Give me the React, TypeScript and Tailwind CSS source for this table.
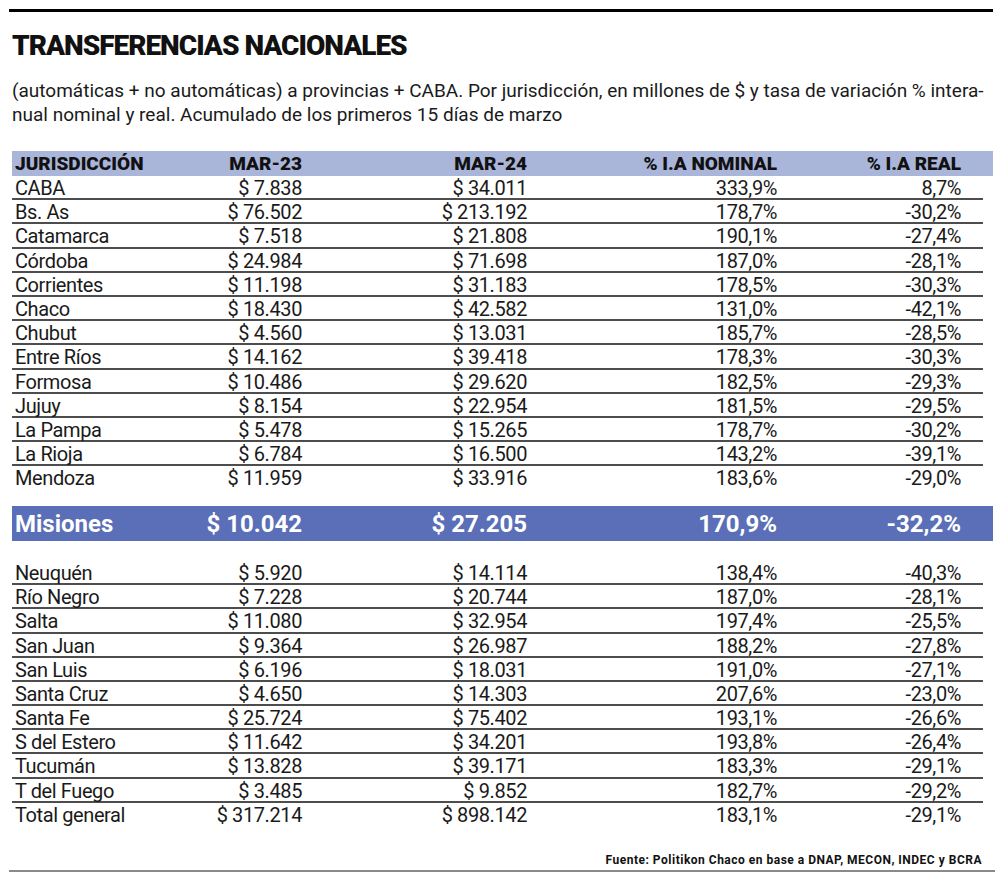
import React from "react";

type Row = [string, string, string, string, string];

const topRows: Row[] = [
  ["CABA", "$ 7.838", "$ 34.011", "333,9%", "8,7%"],
  ["Bs. As", "$ 76.502", "$ 213.192", "178,7%", "-30,2%"],
  ["Catamarca", "$ 7.518", "$ 21.808", "190,1%", "-27,4%"],
  ["Córdoba", "$ 24.984", "$ 71.698", "187,0%", "-28,1%"],
  ["Corrientes", "$ 11.198", "$ 31.183", "178,5%", "-30,3%"],
  ["Chaco", "$ 18.430", "$ 42.582", "131,0%", "-42,1%"],
  ["Chubut", "$ 4.560", "$ 13.031", "185,7%", "-28,5%"],
  ["Entre Ríos", "$ 14.162", "$ 39.418", "178,3%", "-30,3%"],
  ["Formosa", "$ 10.486", "$ 29.620", "182,5%", "-29,3%"],
  ["Jujuy", "$ 8.154", "$ 22.954", "181,5%", "-29,5%"],
  ["La Pampa", "$ 5.478", "$ 15.265", "178,7%", "-30,2%"],
  ["La Rioja", "$ 6.784", "$ 16.500", "143,2%", "-39,1%"],
  ["Mendoza", "$ 11.959", "$ 33.916", "183,6%", "-29,0%"],
];

const bottomRows: Row[] = [
  ["Neuquén", "$ 5.920", "$ 14.114", "138,4%", "-40,3%"],
  ["Río Negro", "$ 7.228", "$ 20.744", "187,0%", "-28,1%"],
  ["Salta", "$ 11.080", "$ 32.954", "197,4%", "-25,5%"],
  ["San Juan", "$ 9.364", "$ 26.987", "188,2%", "-27,8%"],
  ["San Luis", "$ 6.196", "$ 18.031", "191,0%", "-27,1%"],
  ["Santa Cruz", "$ 4.650", "$ 14.303", "207,6%", "-23,0%"],
  ["Santa Fe", "$ 25.724", "$ 75.402", "193,1%", "-26,6%"],
  ["S del Estero", "$ 11.642", "$ 34.201", "193,8%", "-26,4%"],
  ["Tucumán", "$ 13.828", "$ 39.171", "183,3%", "-29,1%"],
  ["T del Fuego", "$ 3.485", "$ 9.852", "182,7%", "-29,2%"],
  ["Total general", "$ 317.214", "$ 898.142", "183,1%", "-29,1%"],
];

const cols = "grid grid-cols-[160px_130px_225px_250px_184px_1fr]";

const DataRow = ({ row, last }: { row: Row; last: boolean }) => (
  <div
    className={`${cols} h-[24.2px] w-[971px] items-center text-[20px] leading-[24px] tracking-[-0.4px] ${
      last ? "" : "border-b-2 border-[#4d4d4d]"
    }`}
  >
    <span className="pl-[3px]">{row[0]}</span>
    <span className="text-right">{row[1]}</span>
    <span className="text-right">{row[2]}</span>
    <span className="text-right">{row[3]}</span>
    <span className="text-right">{row[4]}</span>
    <span />
  </div>
);

export default function App() {
  return (
    <div className="w-[1000px] h-[885px] overflow-hidden bg-white text-[#1a1a1a] font-['Roboto',sans-serif]">
      <div className="pt-[9px] pl-[9px]">
        <div className="h-[3px] w-[984px] bg-black" />
      </div>

      <h1 className="ml-[12px] mt-[20px] text-[28px] leading-[28px] font-black tracking-[-1px] text-[#111]">
        TRANSFERENCIAS NACIONALES
      </h1>

      <p className="ml-[12px] mt-[19px] text-[19px] leading-[24px] whitespace-nowrap">
        (automáticas + no automáticas) a provincias + CABA. Por jurisdicción, en millones de $ y tasa de variación % intera-
        <br />
        nual nominal y real. Acumulado de los primeros 15 días de marzo
      </p>

      <div className="ml-[12px] mt-[24px] w-[981px]">
        {/* header */}
        <div className={`${cols} h-[25px] items-center bg-[#aab5da] text-[19px] leading-[24px] font-black text-[#111]`}>
          <span className="pl-[3px]">JURISDICCIÓN</span>
          <span className="text-right">MAR-23</span>
          <span className="text-right">MAR-24</span>
          <span className="text-right">% I.A NOMINAL</span>
          <span className="text-right">% I.A REAL</span>
          <span />
        </div>

        {topRows.map((r, i) => (
          <DataRow key={r[0]} row={r} last={i === topRows.length - 1} />
        ))}

        {/* highlighted province */}
        <div className={`${cols} mt-[16px] h-[35px] items-center bg-[#5a6fb7] text-[24px] leading-[28px] font-bold text-white`}>
          <span className="pl-[3px]">Misiones</span>
          <span className="text-right">$ 10.042</span>
          <span className="text-right">$ 27.205</span>
          <span className="text-right">170,9%</span>
          <span className="text-right">-32,2%</span>
          <span />
        </div>

        <div className="mt-[19.5px]">
          {bottomRows.map((r, i) => (
            <DataRow key={r[0]} row={r} last={i === bottomRows.length - 1} />
          ))}
        </div>
      </div>

      <div className="ml-[12px] mt-[25px] w-[970px] text-right text-[12px] leading-[16px] font-bold tracking-[0.5px] text-[#111]">
        Fuente: Politikon Chaco en base a DNAP, MECON, INDEC y BCRA
      </div>

      <div className="ml-[9px] mt-[2px] h-[2px] w-[986px] bg-[#8a8a8a]" />
    </div>
  );
}
